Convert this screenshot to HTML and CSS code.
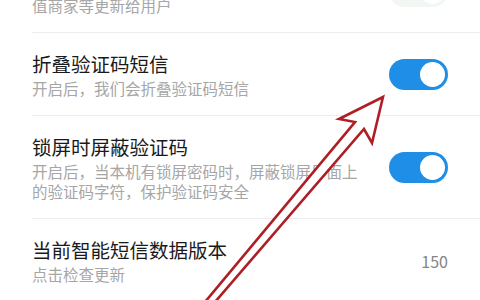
FILE: index.html
```html
<!DOCTYPE html>
<html lang="zh-CN">
<head>
    <meta charset="UTF-8">
    <title>短信设置</title>
    <link rel="stylesheet" href="styles.css">
</head>
<body>
    <div class="list">
        <div class="row">
            <div class="text">
                <div class="title">智能短信服务</div>
                <div class="desc">值商家等更新给用户</div>
            </div>
            <span class="toggle off"></span>
        </div>
        <div class="row">
            <div class="text">
                <div class="title">折叠验证码短信</div>
                <div class="desc">开启后，我们会折叠验证码短信</div>
            </div>
            <span class="toggle"></span>
        </div>
        <div class="row">
            <div class="text">
                <div class="title">锁屏时屏蔽验证码</div>
                <div class="desc">开启后，当本机有锁屏密码时，屏蔽锁屏界面上的验证码字符，保护验证码安全</div>
            </div>
            <span class="toggle"></span>
        </div>
        <div class="row">
            <div class="text">
                <div class="title">当前智能短信数据版本</div>
                <div class="desc">点击检查更新</div>
            </div>
            <span class="value">150</span>
        </div>
    </div>

    <!-- annotation arrow drawn over the screenshot -->
    <svg class="arrow" width="480" height="300" viewBox="0 0 480 300">
        <polygon points="383,97 372,143 364,129 215,302 205,302 355,122 339,119"
                 fill="#fff" stroke="#ad1f24" stroke-width="2.6" stroke-linejoin="miter"/>
    </svg>
</body>
</html>
```

FILE: styles.css
```css
body {
    margin: 0;
    background-color: #fff;
    font-family: "Noto Sans CJK SC", "Noto Sans", sans-serif;
    overflow: hidden;
}

.list {
    margin-top: -50px;
}

.row {
    display: flex;
    align-items: center;
    gap: 24px;
    margin-left: 32px;
    padding: 18px 32px 17px 0;
    border-bottom: 1px solid #ececec;
}

.text {
    flex: 1;
}

.title {
    font-size: 19.5px;
    line-height: 26px;
    color: #1a1a1a;
    margin-bottom: 1px;
}

.desc {
    font-size: 15.5px;
    line-height: 20px;
    color: #a6a6a6;
}

.toggle {
    position: relative;
    width: 59px;
    height: 31px;
    border-radius: 16px;
    background-color: #1e8ee6;
    flex-shrink: 0;
}

.toggle::after {
    content: "";
    position: absolute;
    top: 3px;
    right: 3px;
    width: 25px;
    height: 25px;
    border-radius: 50%;
    background-color: #fff;
}

.toggle.off {
    background-color: #f1f7f2;
}

.value {
    font-size: 16px;
    color: #858585;
}

.arrow {
    position: absolute;
    top: 0;
    left: 0;
    pointer-events: none;
}
```
